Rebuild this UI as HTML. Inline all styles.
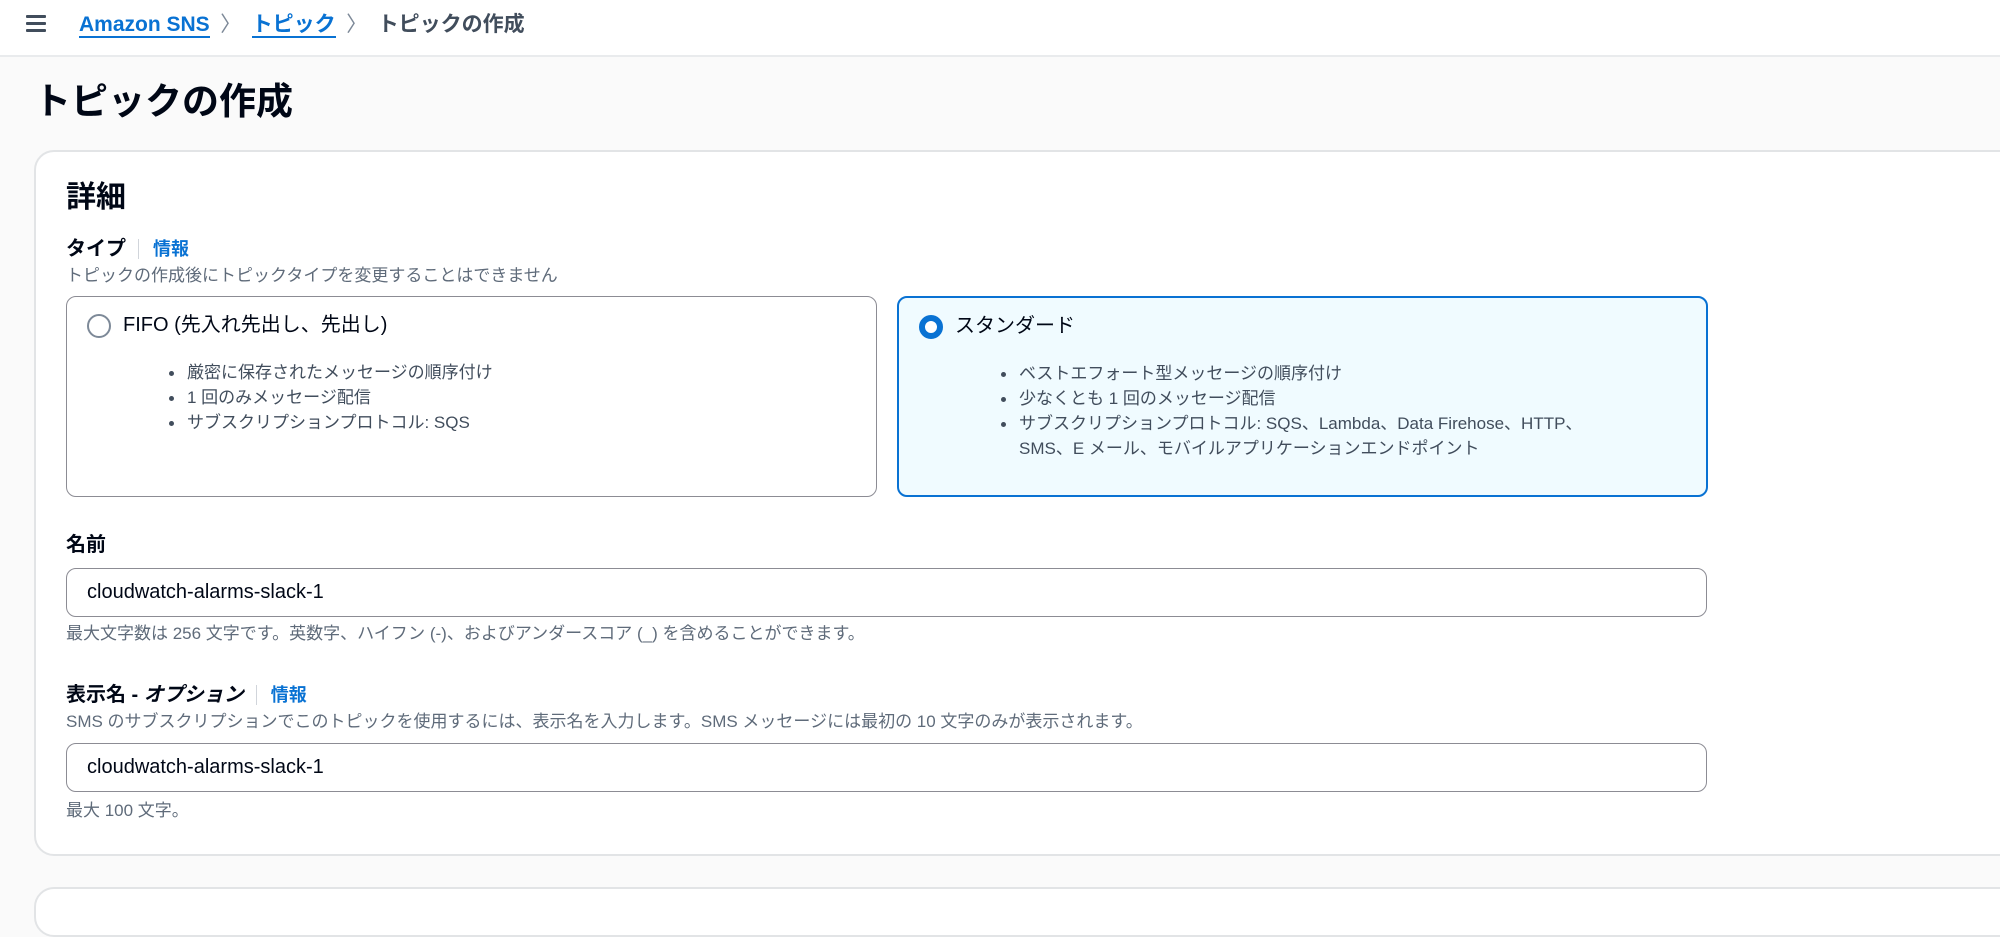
<!DOCTYPE html>
<html><head><meta charset="utf-8"><style>
*{box-sizing:border-box;margin:0;padding:0}
body{width:2000px;height:890px;overflow:hidden;background:#fafafa;font-family:"Liberation Sans","Noto Sans CJK JP",sans-serif;color:#000716;position:relative}
.hdr{position:absolute;left:0;top:0;width:2000px;height:57px;background:#fff;border-bottom:2px solid #e9ebed}
.ham{position:absolute;left:26px;top:15px;width:20px}
.ham i{display:block;height:3px;background:#414d5c;margin-bottom:4px;border-radius:1px}
.bc{position:absolute;top:11px;font-size:21px;line-height:28px;font-weight:bold}
.lnk{color:#0972d3;border-bottom:2px solid #0972d3}
.sep{color:#7d8998;font-weight:normal;display:inline-block;width:42px;text-align:center}
.abs{position:absolute;white-space:nowrap}
h1{position:absolute;left:34px;top:78px;font-size:37px;font-weight:bold;line-height:48px}
.card{position:absolute;left:34px;top:150px;width:2000px;height:706px;background:#fff;border:2px solid #e2e4e6;border-radius:20px}
.card2{position:absolute;left:34px;top:887px;width:2000px;height:50px;background:#fff;border:2px solid #e2e4e6;border-radius:20px}
.tile{position:absolute;top:296px;width:811px;height:201px;border:1.5px solid #8c8c94;border-radius:10px;background:#fff}
.tile.sel{border:2px solid #0972d3;background:#f0fbff}
.radio{position:absolute;left:20px;top:17px;width:24px;height:24px;border-radius:50%;border:2px solid #7d8998;background:#fff}
.sel .radio{border:6px solid #0972d3}
.tt{position:absolute;left:56px;top:12px;font-size:20px;line-height:32px}
ul{position:absolute;left:102px;top:63px;font-size:17px;line-height:25px;color:#414d5c;list-style:none}
li{position:relative;padding-left:18px}
li:before{content:"";position:absolute;left:0;top:11px;width:5px;height:5px;border-radius:50%;background:#414d5c}
.lbl{font-size:20px;font-weight:bold;line-height:28px}
.info{color:#0972d3;font-size:18px;font-weight:bold;border-left:1px solid #d1d5db;padding-left:14px;margin-left:12px}
.desc{font-size:17px;color:#5f6b7a;line-height:24px}
.inp{position:absolute;left:66px;width:1641px;height:49px;border:1.5px solid #8c8c94;border-radius:10px;background:#fff;font-size:20px;line-height:46px;padding-left:20px}
</style></head><body>
<div class="hdr">
<div class="ham"><i></i><i></i><i></i></div>
<div class="bc" style="left:79px"><span class="lnk">Amazon SNS</span><span class="sep">〉</span><span class="lnk">トピック</span><span class="sep">〉</span><span style="color:#414d5c">トピックの作成</span></div>
</div>
<h1>トピックの作成</h1>
<div class="card"></div>
<div class="card2"></div>
<div class="abs" style="left:66px;top:178px;font-size:30px;font-weight:bold;line-height:40px">詳細</div>
<div class="abs lbl" style="left:66px;top:235px">タイプ<span class="info">情報</span></div>
<div class="abs desc" style="left:66px;top:264px">トピックの作成後にトピックタイプを変更することはできません</div>
<div class="tile" style="left:66px">
<div class="radio"></div><div class="tt">FIFO (先入れ先出し、先出し)</div>
<ul><li>厳密に保存されたメッセージの順序付け</li><li>1 回のみメッセージ配信</li><li>サブスクリプションプロトコル: SQS</li></ul>
</div>
<div class="tile sel" style="left:897px">
<div class="radio"></div><div class="tt">スタンダード</div>
<ul><li>ベストエフォート型メッセージの順序付け</li><li>少なくとも 1 回のメッセージ配信</li><li>サブスクリプションプロトコル: SQS、Lambda、Data Firehose、HTTP、<br>SMS、E メール、モバイルアプリケーションエンドポイント</li></ul>
</div>
<div class="abs lbl" style="left:66px;top:531px">名前</div>
<div class="inp" style="top:568px">cloudwatch-alarms-slack-1</div>
<div class="abs desc" style="left:66px;top:622px">最大文字数は 256 文字です。英数字、ハイフン (-)、およびアンダースコア (_) を含めることができます。</div>
<div class="abs lbl" style="left:66px;top:681px">表示名 - <i>オプション</i><span class="info">情報</span></div>
<div class="abs desc" style="left:66px;top:710px">SMS のサブスクリプションでこのトピックを使用するには、表示名を入力します。SMS メッセージには最初の 10 文字のみが表示されます。</div>
<div class="inp" style="top:743px">cloudwatch-alarms-slack-1</div>
<div class="abs desc" style="left:66px;top:799px">最大 100 文字。</div>
</body></html>
